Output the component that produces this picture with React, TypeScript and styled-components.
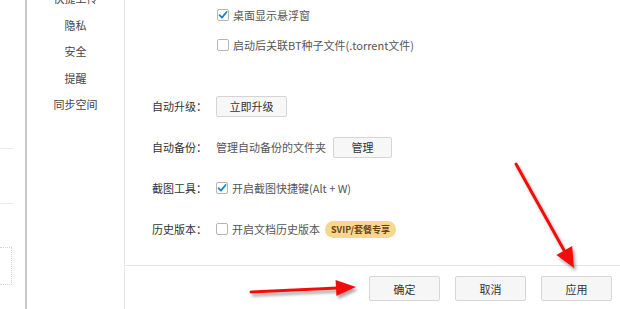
import styled, { createGlobalStyle } from "styled-components";

const GlobalStyle = createGlobalStyle`
    html, body {
        margin: 0;
        padding: 0;
        background: #ffffff;
    }
    body {
        font-family: "Noto Sans CJK SC", "Noto Sans", "Liberation Sans", sans-serif;
        font-size: 11px;
        color: #333;
    }
    * {
        box-sizing: border-box;
    }
`;

const Page = styled.div`
    position: relative;
    width: 620px;
    height: 309px;
    display: flex;
    overflow: hidden;
    background: #fff;
`;

const LeftStrip = styled.div`
    width: 27px;
    flex-shrink: 0;
    border-right: 2px solid #c9c9c9;
    display: flex;
    flex-direction: column;
`;

const StripLine = styled.div<{ $top: number }>`
    margin-top: ${(p) => p.$top}px;
    width: 13px;
    height: 1px;
    background: #ececec;
`;

const StripBox = styled.div`
    margin-top: 43px;
    width: 12px;
    height: 38px;
    border: 1px dotted #d4d4d4;
    border-left: none;
`;

const Sidebar = styled.nav`
    width: 98px;
    flex-shrink: 0;
    border-right: 1px solid #e6e6e6;
`;

const NavList = styled.ul`
    list-style: none;
    margin: -15px 0 0;
    padding: 0;
`;

const NavItem = styled.li`
    height: 26.5px;
    line-height: 26.5px;
    text-align: center;
    color: #444;
`;

const Main = styled.div`
    flex: 1;
    display: flex;
    flex-direction: column;
`;

const Content = styled.div`
    height: 266px;
    border-bottom: 1px solid #e6e6e6;
    padding-left: 27px;
`;

const OptionList = styled.div`
    padding-left: 65px;
`;

const OptionRow = styled.label`
    height: 30px;
    display: flex;
    align-items: center;
    gap: 4px;
    color: #555;
`;

const Settings = styled.div`
    margin-top: 25.5px;
`;

const SettingRow = styled.div`
    height: 41px;
    display: grid;
    grid-template-columns: 64px auto;
    align-items: center;
`;

const Label = styled.span`
    color: #333;
`;

const Value = styled.div`
    display: flex;
    align-items: center;
    gap: 4px;
    color: #555;
`;

const Hint = styled.span`
    margin-right: 3px;
`;

const Box = styled.span`
    width: 12px;
    height: 12px;
    flex-shrink: 0;
    border: 1px solid #b5b5b5;
    border-radius: 2px;
    background: #fff;
    display: flex;
    align-items: center;
    justify-content: center;
`;

const SmallButton = styled.button<{ $width: number }>`
    width: ${(p) => p.$width}px;
    height: 21px;
    padding: 0;
    font: inherit;
    color: #333;
    background: #f7f7f7;
    border: 1px solid #d5d5d5;
    border-radius: 2px;
`;

const Badge = styled.span`
    margin-left: 1px;
    height: 17px;
    padding: 0 6px;
    display: inline-flex;
    align-items: center;
    border-radius: 9px;
    background: #f8d68e;
    color: #6b4310;
    font-size: 9px;
    font-weight: bold;
`;

const Footer = styled.div`
    flex: 1;
    display: flex;
    justify-content: flex-end;
    gap: 15px;
    padding: 10px 8px 0 0;
`;

const FooterButton = styled.button`
    width: 71px;
    height: 25px;
    padding: 0;
    font: inherit;
    color: #333;
    background: #f6f6f6;
    border: 1px solid #d6d6d6;
    border-radius: 2px;
`;

const Overlay = styled.svg`
    position: absolute;
    left: 0;
    top: 0;
    pointer-events: none;
`;

function Checkbox({ checked }: { checked?: boolean }) {
    return (
        <Box>
            {checked && (
                <svg width="10" height="10" viewBox="0 0 10 10">
                    <path
                        d="M1.5 5.2 L4 7.6 L8.6 2"
                        fill="none"
                        stroke="#1d7fe0"
                        strokeWidth="1.8"
                        strokeLinecap="round"
                        strokeLinejoin="round"
                    />
                </svg>
            )}
        </Box>
    );
}

const navItems = ["快捷上传", "隐私", "安全", "提醒", "同步空间"];

function App() {
    return (
        <Page>
            <GlobalStyle />
            <LeftStrip>
                <StripLine $top={148} />
                <StripLine $top={54} />
                <StripBox />
            </LeftStrip>
            <Sidebar>
                <NavList>
                    {navItems.map((item) => (
                        <NavItem key={item}>{item}</NavItem>
                    ))}
                </NavList>
            </Sidebar>
            <Main>
                <Content>
                    <OptionList>
                        <OptionRow>
                            <Checkbox checked />
                            桌面显示悬浮窗
                        </OptionRow>
                        <OptionRow>
                            <Checkbox />
                            启动后关联BT种子文件(.torrent文件)
                        </OptionRow>
                    </OptionList>
                    <Settings>
                        <SettingRow>
                            <Label>自动升级：</Label>
                            <Value>
                                <SmallButton $width={71}>立即升级</SmallButton>
                            </Value>
                        </SettingRow>
                        <SettingRow>
                            <Label>自动备份：</Label>
                            <Value>
                                <Hint>管理自动备份的文件夹</Hint>
                                <SmallButton $width={59}>管理</SmallButton>
                            </Value>
                        </SettingRow>
                        <SettingRow>
                            <Label>截图工具：</Label>
                            <Value>
                                <Checkbox checked />
                                开启截图快捷键(Alt + W)
                            </Value>
                        </SettingRow>
                        <SettingRow>
                            <Label>历史版本：</Label>
                            <Value>
                                <Checkbox />
                                开启文档历史版本
                                <Badge>SVIP/套餐专享</Badge>
                            </Value>
                        </SettingRow>
                    </Settings>
                </Content>
                <Footer>
                    <FooterButton>确定</FooterButton>
                    <FooterButton>取消</FooterButton>
                    <FooterButton>应用</FooterButton>
                </Footer>
            </Main>
            <Overlay width="620" height="309" viewBox="0 0 620 309">
                <defs>
                    <filter id="shadow" x="-20%" y="-20%" width="140%" height="140%">
                        <feDropShadow dx="2" dy="3" stdDeviation="1.6" floodColor="#000" floodOpacity="0.35" />
                    </filter>
                </defs>
                <g filter="url(#shadow)" fill="#f21010" stroke="#f21010">
                    <line x1="251" y1="292" x2="338" y2="288" strokeWidth="3" strokeLinecap="round" />
                    <polygon points="356,287 336.4,296 335.6,280" strokeWidth="0" />
                    <line x1="516" y1="164" x2="565" y2="252" strokeWidth="3" strokeLinecap="round" />
                    <polygon points="574,268 556.4,254.9 572.2,246.1" strokeWidth="0" />
                </g>
            </Overlay>
        </Page>
    );
}

export default App;
